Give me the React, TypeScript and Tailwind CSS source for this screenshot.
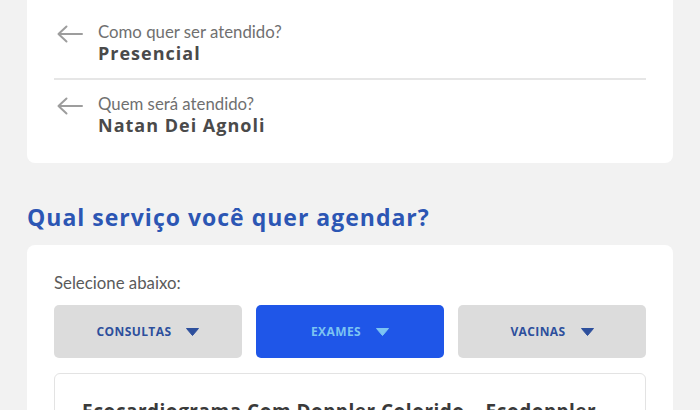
const lato = { fontFamily: 'Lato, "Noto Sans", sans-serif' };
const open = { fontFamily: '"Open Sans", "Noto Sans", sans-serif' };

function Caret({ color }: { color: string }) {
  return (
    <svg width="13" height="8" viewBox="0 0 13 8" className="ml-[15px]">
      <path d="M0.5 0.5 L12.5 0.5 L6.5 7.5 Z" fill={color} strokeLinejoin="round" stroke={color} />
    </svg>
  );
}

function BackArrow() {
  return (
    <svg width="26" height="18" viewBox="0 0 26 18" fill="none" stroke="#9d9d9d" strokeWidth="2" strokeLinecap="round" strokeLinejoin="round">
      <path d="M25 9 H1.5 M9.5 1.5 L1.5 9 L9.5 16.5" />
    </svg>
  );
}

function InfoRow({ label, value, className }: { label: string; value: string; className: string }) {
  return (
    <div className={`flex items-start ${className}`}>
      <div className="w-[44px] pl-[3px] pt-[3px]">
        <BackArrow />
      </div>
      <div className="flex flex-col">
        <span className="text-[16.8px] leading-[20px] text-[#707070]" style={lato}>{label}</span>
        <span className="text-[18px] leading-[22px] font-bold text-[#4a4a4a] tracking-[1px]" style={open}>{value}</span>
      </div>
    </div>
  );
}

function Tab({ label, active }: { label: string; active?: boolean }) {
  return (
    <button
      className={`flex-1 h-[53px] rounded-[5px] flex items-center justify-center text-[12px] font-bold tracking-[0.4px] ${
        active ? 'bg-[#1f56e8] text-[#7cc4f2]' : 'bg-[#dcdcdc] text-[#2d4f9c]'
      }`}
      style={open}
    >
      {label}
      <Caret color={active ? '#7cc4f2' : '#2d4f9c'} />
    </button>
  );
}

export default function App() {
  return (
    <div className="w-[700px] h-[410px] overflow-hidden bg-[#f2f2f2]" style={lato}>
      <div className="px-[27px]">
        <div className="bg-white rounded-b-[8px] px-[27px] pb-[27px]">
          <InfoRow className="pt-[22px] pb-[14px]" label="Como quer ser atendido?" value="Presencial" />
          <div className="h-[2px] bg-[#e6e6e6]" />
          <InfoRow className="pt-[14px]" label="Quem será atendido?" value="Natan Dei Agnoli" />
        </div>

        <h2
          className="mt-[40px] text-[23px] font-bold text-[#2c56b4] tracking-[1px] leading-[28px]"
          style={open}
        >
          Qual serviço você quer agendar?
        </h2>

        <div className="mt-[14px] bg-white rounded-[8px] px-[27px] pt-[27px] pb-4">
          <p className="text-[16.8px] text-[#5a5a5a] leading-[22px]">Selecione abaixo:</p>
          <div className="mt-[11px] flex gap-[14px]">
            <Tab label="CONSULTAS" />
            <Tab label="EXAMES" active />
            <Tab label="VACINAS" />
          </div>
          <div className="mt-[15px] border border-[#e3e3e3] rounded-[6px] px-[27px] pt-[24px] pb-4">
            <p
              className="text-[19px] leading-[26px] font-bold text-[#3a3a3a] tracking-[0.5px] whitespace-nowrap"
              style={open}
            >
              Ecocardiograma Com Doppler Colorido – Ecodoppler
            </p>
          </div>
        </div>
      </div>
    </div>
  );
}
